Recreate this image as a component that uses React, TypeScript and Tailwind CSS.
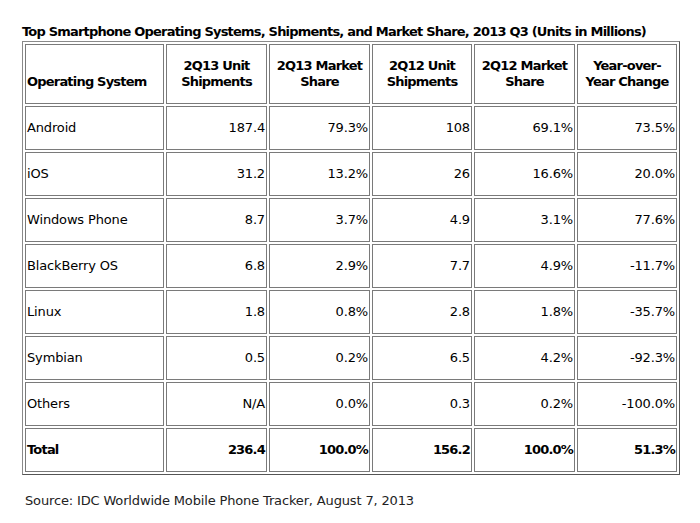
const headers = [
  { label: ["2Q13 Unit", "Shipments"] },
  { label: ["2Q13 Market", "Share"] },
  { label: ["2Q12 Unit", "Shipments"] },
  { label: ["2Q12 Market", "Share"] },
  { label: ["Year-over-", "Year Change"] },
];

const rows: string[][] = [
  ["Android", "187.4", "79.3%", "108", "69.1%", "73.5%"],
  ["iOS", "31.2", "13.2%", "26", "16.6%", "20.0%"],
  ["Windows Phone", "8.7", "3.7%", "4.9", "3.1%", "77.6%"],
  ["BlackBerry OS", "6.8", "2.9%", "7.7", "4.9%", "-11.7%"],
  ["Linux", "1.8", "0.8%", "2.8", "1.8%", "-35.7%"],
  ["Symbian", "0.5", "0.2%", "6.5", "4.2%", "-92.3%"],
  ["Others", "N/A", "0.0%", "0.3", "0.2%", "-100.0%"],
];

const total = ["Total", "236.4", "100.0%", "156.2", "100.0%", "51.3%"];

// DejaVu bold runs wider than the original Verdana bold, so tighten it
const bold = "font-bold tracking-[-0.8px]";
const cell = "border border-[#7a7a7a] px-[1px] align-middle";

export default function App() {
  return (
    <div
      className="min-h-[523px] w-[700px] bg-white text-[13px] leading-[16px] tracking-[-0.15px] text-black"
      style={{ fontFamily: '"DejaVu Sans", Verdana, sans-serif' }}
    >
      <div className="pl-[22px] pt-[24px]">
        <div className={`mb-[1px] whitespace-nowrap ${bold}`}>
          Top Smartphone Operating Systems, Shipments, and Market Share, 2013 Q3 (Units in Millions)
        </div>
        <table className="w-[654px] table-fixed border-separate border-spacing-[2px] border border-[#8a8a8a] border-r-[#555] border-b-[#555]">
          <colgroup>
            <col className="w-[139px]" />
            <col className="w-[101px]" />
            <col className="w-[101px]" />
            <col className="w-[100px]" />
            <col className="w-[101px]" />
            <col className="w-[100px]" />
          </colgroup>
          <thead>
            <tr className="h-[60px]">
              <th className={`${cell} ${bold} pt-[16px] text-left`}>Operating System</th>
              {headers.map((h) => (
                <th key={h.label[0]} className={`${cell} ${bold} text-center`}>
                  {h.label[0]}
                  <br />
                  {h.label[1]}
                </th>
              ))}
            </tr>
          </thead>
          <tbody>
            {rows.map((r) => (
              <tr key={r[0]} className="h-[44px]">
                {r.map((v, i) => (
                  <td key={i} className={`${cell} ${i === 0 ? "text-left" : "text-right"}`}>
                    {v}
                  </td>
                ))}
              </tr>
            ))}
            <tr className="h-[44px]">
              {total.map((v, i) => (
                <td key={i} className={`${cell} ${bold} ${i === 0 ? "text-left" : "text-right"}`}>
                  {v}
                </td>
              ))}
            </tr>
          </tbody>
        </table>
        <div className="mt-[18px] pl-[3px] text-[#222]">
          Source: IDC Worldwide Mobile Phone Tracker, August 7, 2013
        </div>
      </div>
    </div>
  );
}
